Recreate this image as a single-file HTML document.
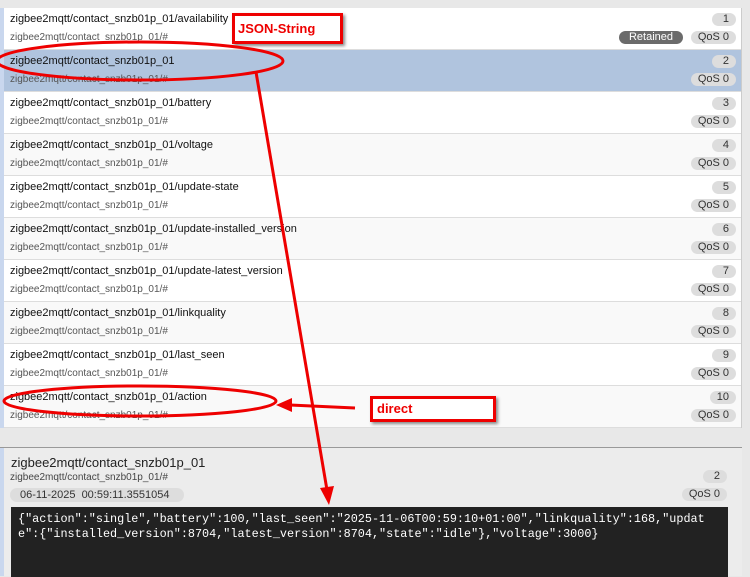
<!DOCTYPE html>
<html><head><style>
body{margin:0;width:750px;height:575px;overflow:hidden;background:#e8e8e8;font-family:"Liberation Sans",sans-serif;position:relative}
.bar{position:absolute;left:0;top:8px;width:4px;height:420px;background:#c9d7ee}
.list{position:absolute;left:4px;top:8px;width:737px;background:#fff;border-right:1px solid #ccc}
.row{height:41px;border-bottom:1px solid #ddd;position:relative;background:#fff}
.row.alt{background:#f9f9f9}
.row.sel{background:#b0c4de}
.t{position:absolute;left:6px;top:5px;font-size:11px;color:#111}
.s{position:absolute;left:6px;top:24px;font-size:10px;color:#555}
.n{position:absolute;right:5px;top:5px;height:13px;line-height:13px;background:#ddd;border-radius:7px;font-size:11px;color:#333;padding:0 7px;min-width:10px;text-align:right}
.q{position:absolute;right:5px;top:23px;height:13px;line-height:13px;background:#ddd;border-radius:7px;font-size:11px;color:#333;padding:0 7px}
.r{position:absolute;right:58px;top:23px;height:13px;line-height:13px;background:#6b6b6b;border-radius:7px;font-size:11px;color:#fff;padding:0 10px}
.det{position:absolute;left:0;top:447px;width:742px;height:128px;background:#ececec;border-top:1px solid #999}
.dbar{position:absolute;left:0;top:0;width:4px;height:128px;background:#c9d7ee}
.code{position:absolute;left:11px;top:59px;width:717px;height:70px;background:#222;color:#fff;font-family:"Liberation Mono",monospace;font-size:11.8px;line-height:15px;padding:5px 7px;box-sizing:border-box;white-space:pre;overflow:hidden}
.box{position:absolute;background:#fff;border:3px solid #e00;color:#e00;font-weight:bold;font-size:13px;box-shadow:2px 2px 3px #888}
</style></head><body>
<div class="bar"></div>
<div class="list">
<div class="row"><div class="t">zigbee2mqtt/contact_snzb01p_01/availability</div><div class="s">zigbee2mqtt/contact_snzb01p_01/#</div><div class="n">1</div><div class="r">Retained</div><div class="q">QoS 0</div></div>
<div class="row sel"><div class="t">zigbee2mqtt/contact_snzb01p_01</div><div class="s">zigbee2mqtt/contact_snzb01p_01/#</div><div class="n">2</div><div class="q">QoS 0</div></div>
<div class="row"><div class="t">zigbee2mqtt/contact_snzb01p_01/battery</div><div class="s">zigbee2mqtt/contact_snzb01p_01/#</div><div class="n">3</div><div class="q">QoS 0</div></div>
<div class="row alt"><div class="t">zigbee2mqtt/contact_snzb01p_01/voltage</div><div class="s">zigbee2mqtt/contact_snzb01p_01/#</div><div class="n">4</div><div class="q">QoS 0</div></div>
<div class="row"><div class="t">zigbee2mqtt/contact_snzb01p_01/update-state</div><div class="s">zigbee2mqtt/contact_snzb01p_01/#</div><div class="n">5</div><div class="q">QoS 0</div></div>
<div class="row alt"><div class="t">zigbee2mqtt/contact_snzb01p_01/update-installed_version</div><div class="s">zigbee2mqtt/contact_snzb01p_01/#</div><div class="n">6</div><div class="q">QoS 0</div></div>
<div class="row"><div class="t">zigbee2mqtt/contact_snzb01p_01/update-latest_version</div><div class="s">zigbee2mqtt/contact_snzb01p_01/#</div><div class="n">7</div><div class="q">QoS 0</div></div>
<div class="row alt"><div class="t">zigbee2mqtt/contact_snzb01p_01/linkquality</div><div class="s">zigbee2mqtt/contact_snzb01p_01/#</div><div class="n">8</div><div class="q">QoS 0</div></div>
<div class="row"><div class="t">zigbee2mqtt/contact_snzb01p_01/last_seen</div><div class="s">zigbee2mqtt/contact_snzb01p_01/#</div><div class="n">9</div><div class="q">QoS 0</div></div>
<div class="row alt"><div class="t">zigbee2mqtt/contact_snzb01p_01/action</div><div class="s">zigbee2mqtt/contact_snzb01p_01/#</div><div class="n">10</div><div class="q">QoS 0</div></div>
</div>
<div class="det"><div class="dbar"></div>
<div style="position:absolute;left:11px;top:7px;font-size:13px;color:#222">zigbee2mqtt/contact_snzb01p_01</div>
<div style="position:absolute;left:10px;top:24px;font-size:10px;color:#444">zigbee2mqtt/contact_snzb01p_01/#</div>
<div style="position:absolute;left:10px;top:40px;width:174px;height:14px;line-height:14px;background:#ddd;border-radius:7px;font-size:11px;color:#333;text-indent:10px">06-11-2025&nbsp; 00:59:11.3551054</div>
<div class="n" style="right:15px;top:22px">2</div>
<div class="q" style="right:15px;top:40px">QoS 0</div>
<div class="code">{"action":"single","battery":100,"last_seen":"2025-11-06T00:59:10+01:00","linkquality":168,"updat
e":{"installed_version":8704,"latest_version":8704,"state":"idle"},"voltage":3000}</div>
</div>
<div class="box" style="left:232px;top:13px;width:105px;height:25px;line-height:25px;text-indent:3px">JSON-String</div>
<div class="box" style="left:370px;top:396px;width:120px;height:20px;line-height:20px;text-indent:4px">direct</div>
<svg width="750" height="575" style="position:absolute;left:0;top:0" fill="none" stroke="#e00" stroke-width="3">
<ellipse cx="140" cy="61" rx="143" ry="19"/>
<ellipse cx="140" cy="401" rx="136" ry="15"/>
<line x1="256" y1="72" x2="327" y2="490"/>
<polygon points="320,488 334,486 329,505" fill="#e00" stroke="none"/>
<line x1="355" y1="408" x2="290" y2="405"/>
<polygon points="292,398 292,412 276,405" fill="#e00" stroke="none"/>
</svg>
</body></html>
